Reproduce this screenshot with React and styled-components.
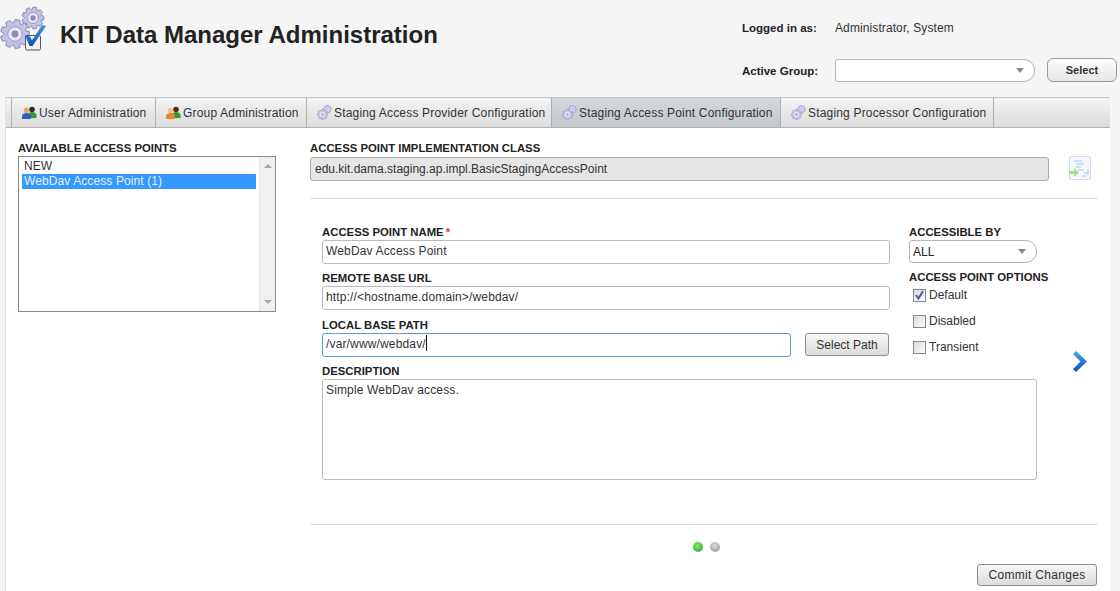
import React from 'react'
import styled, {createGlobalStyle} from 'styled-components'

const GlobalStyle = createGlobalStyle`
  html, body {
    margin: 0;
    height: 591px;
    overflow: hidden;
    background: #f5f5f5;
    color: #222;
    font: 12px/16px "Liberation Sans", Arial, sans-serif;
  }
  * { box-sizing: border-box; }
`

function gearPath(cx, cy, outer, inner, teeth) {
  const step = (Math.PI * 2) / teeth
  const points = []
  for (let i = 0; i < teeth; i++) {
    const a = i * step
    const pairs = [[-0.3, inner], [-0.17, outer], [0.17, outer], [0.3, inner]]
    pairs.forEach(([off, r]) => {
      const x = cx + Math.cos(a + off * step * 1.4) * r
      const y = cy + Math.sin(a + off * step * 1.4) * r
      points.push(`${x.toFixed(2)} ${y.toFixed(2)}`)
    })
  }
  return `M${points.join('L')}Z`
}

function Gear({cx, cy, r, teeth = 10}) {
  const big = r > 8
  return (
    <g>
      <path d={gearPath(cx, cy, r, r * 0.78, teeth)} fill="#c2c2e6" stroke="#8a8ab8" strokeWidth={big ? 1 : 0.4} />
      <circle cx={cx} cy={cy} r={r * 0.5} fill="#e6e6f6" stroke={big ? '#9a9ac4' : 'none'} />
      <circle cx={cx} cy={cy} r={r * 0.24} fill={big ? '#8c8cba' : '#a8a8d0'} />
    </g>
  )
}

function LogoIcon() {
  return (
    <svg width="46" height="52" viewBox="0 0 46 52">
      <defs>
        <linearGradient id="tick" x1="0" y1="0" x2="0" y2="1">
          <stop offset="0" stopColor="#3f9bf0" />
          <stop offset="1" stopColor="#0a4fb5" />
        </linearGradient>
      </defs>
      <Gear cx={33} cy={18} r={11} teeth={9} />
      <Gear cx={15} cy={34} r={14.5} teeth={9} />
      <rect x="25.500" y="35.500" width="15" height="14.500" rx="1.500" fill="#f4f4f4" stroke="#555" />
      <path d="M25 35l5 1.500 2 4L42 25l4 1-13.500 20h-3z" fill="url(#tick)" />
    </svg>
  )
}

function GearsIcon() {
  return (
    <svg width="15" height="15" viewBox="0 0 15 15">
      <Gear cx={10.5} cy={4.2} r={4} teeth={8} />
      <Gear cx={5.5} cy={9.5} r={5.4} teeth={8} />
    </svg>
  )
}

function UsersIcon({swap}) {
  const front = swap ? '#e8892a' : '#2d62c4'
  const backHead = swap ? '#4a3018' : '#2a2a2a'
  const frontHead = swap ? '#f0c090' : '#e9a860'
  return (
    <svg width="15" height="13" viewBox="0 0 15 13">
      <circle cx="10" cy="3.500" r="2.800" fill={backHead} />
      <path d="M6 12V9c0-2 2-3 4-3s4.500 1 4.500 3v3z" fill="#2f9a35" />
      <circle cx="4.500" cy="4.500" r="2.800" fill={frontHead} />
      <path d="M0 13V10c0-2 2-3 4.500-3S9 8 9 10v3z" fill={front} />
    </svg>
  )
}

function ImportIcon() {
  return (
    <svg width="24" height="25" viewBox="0 0 24 25">
      <rect x="1.500" y="0.500" width="21" height="23" rx="2" fill="#f4f8fc" stroke="#d5dde6" />
      <path d="M6 5h8M8 8h8M8 11h5M10 14h6M16 17h4M14 20h5M20 13v6" stroke="#a6c4e6" strokeWidth="1" fill="none" />
      <path d="M1 15h5v-3l5 4.500-5 4.500v-3H1z" fill="#a9dd8b" />
    </svg>
  )
}

function NextArrow() {
  return (
    <svg width="15" height="21" viewBox="0 0 15 21">
      <defs>
        <linearGradient id="arrow" x1="0" y1="0" x2="0" y2="1">
          <stop offset="0" stopColor="#45a0f2" />
          <stop offset="1" stopColor="#0b55b8" />
        </linearGradient>
      </defs>
      <path d="M1 3l3-3 11 10.500L4 21l-3-3 7.500-7.500z" fill="url(#arrow)" />
    </svg>
  )
}

const Header = styled.header`
  display: flex;
  justify-content: space-between;
  height: 97px;
`

const Brand = styled.div`
  display: flex;
  align-items: flex-start;
  gap: 14px;
`

const Title = styled.h1`
  margin: 22px 0 0;
  font-size: 24px;
  line-height: 26px;
  font-weight: bold;
  color: #222;
`

const Session = styled.div`
  display: grid;
  grid-template-columns: 93px 200px 82px;
  grid-template-rows: 24px 23px;
  row-gap: 19px;
  align-items: center;
  padding: 16px 3px 0 0;
`

const SessionLabel = styled.span`
  font-size: 11.5px;
  font-weight: bold;
`

const SessionValue = styled.span`
  grid-column: span 2;
  color: #333;
  letter-spacing: 0.1px;
`

const Combo = styled.div`
  display: flex;
  align-items: center;
  width: ${(props) => props.width}px;
  height: 23px;
  padding: 0 10px 0 3px;
  background: #fff;
  border: 1px solid #b6b6b6;
  border-radius: 3px 11px 11px 3px;
  &::after {
    content: '';
    margin-left: auto;
    border: 4px solid transparent;
    border-top: 5px solid #888;
    border-bottom: 0;
  }
`

const RoundButton = styled.button`
  align-self: start;
  justify-self: end;
  width: 70px;
  height: 24px;
  margin-top: -1px;
  padding: 0;
  font: bold 11px "Liberation Sans", Arial, sans-serif;
  color: #333;
  background: linear-gradient(#fdfdfd, #e6e6e6);
  border: 1px solid #9a9a9a;
  border-radius: 6px;
`

const Panel = styled.main`
  height: 494px;
  margin: 0 10px 0 5px;
  background: #fff;
  border-left: 1px solid #e2e2e2;
`

const TabBar = styled.nav`
  display: flex;
  height: 31px;
  padding-left: 5px;
  background: linear-gradient(#f3f3f3, #dcdcdc);
  border-top: 1px solid #c4c4c4;
  border-bottom: 1px solid #b4b4b4;
`

const Tab = styled.div`
  display: flex;
  align-items: center;
  gap: 2px;
  width: ${(props) => props.width}px;
  padding-left: 10px;
  letter-spacing: 0.18px;
  color: #333;
  white-space: nowrap;
  border-left: 1px solid #b0b0b0;
  background: ${(props) => props.active ? 'linear-gradient(#d3d8dd, #c3c8cd)' : 'none'};
  &:last-child {
    border-right: 1px solid #b0b0b0;
  }
`

const Body = styled.div`
  display: flex;
  padding: 12px 12px 0 12px;
`

const Sidebar = styled.aside`
  width: 258px;
  margin-right: 34px;
`

const SectionLabel = styled.div`
  height: 16px;
  margin-top: ${(props) => props.top || 0}px;
  font-size: 11.35px;
  font-weight: bold;
  color: #222;
  white-space: nowrap;
`

const ListBox = styled.div`
  display: flex;
  height: 156px;
  border: 1px solid #888;
  letter-spacing: 0.1px;
`

const ListItems = styled.div`
  flex: 1;
  padding: 2px 3px 0;
`

const ListItem = styled.div`
  height: 15px;
  padding-left: 2px;
  line-height: 15px;
  color: ${(props) => props.selected ? '#e6f0ff' : '#333'};
  background: ${(props) => props.selected ? '#3399ff' : 'none'};
`

const ScrollTrack = styled.div`
  display: flex;
  flex-direction: column;
  justify-content: space-between;
  align-items: center;
  width: 16px;
  padding: 7px 0;
  background: #f0f0f0;
  border-left: 1px solid #e4e4e4;
`

const ScrollArrow = styled.span`
  border-left: 4px solid transparent;
  border-right: 4px solid transparent;
  border-${(props) => props.down ? 'top' : 'bottom'}: 4px solid #a8a8a8;
`

const Editor = styled.section`
  flex: 1;
  min-width: 0;
`

const ClassRow = styled.div`
  display: flex;
  align-items: center;
  gap: 19px;
`

const ClassField = styled.div`
  flex: 1;
  height: 24px;
  padding: 0 4px;
  line-height: 22px;
  color: #333;
  background: #e6e6e6;
  border: 1px solid #aaa;
  border-radius: 3px;
`

const ClassIcon = styled.div`
  display: flex;
  width: 24px;
  margin-right: 6px;
`

const Rule = styled.hr`
  height: 1px;
  margin: ${(props) => props.top}px 0 0;
  border: 0;
  background: #dcdcdc;
`

const FormRow = styled.div`
  display: flex;
  align-items: center;
  padding: 25px 0 0 12px;
`

const FormGrid = styled.div`
  display: grid;
  grid-template-columns: 568px 128px;
  column-gap: 19px;
`

const Column = styled.div`
  display: flex;
  flex-direction: column;
`

const Field = styled.div`
  height: ${(props) => props.height || 24}px;
  margin-bottom: ${(props) => props.bottom || 0}px;
  padding: 0 3px;
  letter-spacing: 0.15px;
  line-height: 20px;
  color: #333;
  white-space: nowrap;
  background: #fff;
  border: 1px solid ${(props) => props.focused ? '#5b9bd5' : '#bbb'};
  border-radius: 3px;
`

const Caret = styled.span`
  display: inline-block;
  width: 1px;
  height: 16px;
  vertical-align: text-bottom;
  background: #111;
`

const Required = styled.span`
  margin-left: 2px;
  color: #d33;
`

const PathRow = styled.div`
  display: flex;
  align-items: flex-start;
  justify-content: space-between;
  padding-right: 1px;
  & > :first-child {
    width: 469px;
  }
`

const PlainButton = styled.button`
  width: ${(props) => props.width}px;
  height: ${(props) => props.height}px;
  padding: 0;
  font: 12px "Liberation Sans", Arial, sans-serif;
  letter-spacing: ${(props) => props.tracking || 0}px;
  color: #333;
  background: linear-gradient(#f6f6f6, #dcdcdc);
  border: 1px solid #8c8c8c;
  border-radius: 3px;
`

const Description = styled.div`
  grid-column: span 2;
`

const Option = styled.label`
  display: flex;
  align-items: center;
  gap: 3px;
  height: 16px;
  margin: 2px 0 8px 4px;
  color: #333;
  &:last-child {
    margin-bottom: 0;
  }
`

const Box = styled.span`
  display: flex;
  align-items: center;
  justify-content: center;
  width: 13px;
  height: 13px;
  background: linear-gradient(135deg, #dcdcdc, #fbfbfb);
  border: 1px solid #8a8a8a;
`

const ArrowSlot = styled.div`
  display: flex;
  margin: 0 0 0 35px;
  padding-top: 19px;
`

const Pager = styled.div`
  display: flex;
  justify-content: center;
  gap: 7px;
  margin-top: 17px;
  padding-left: 5px;
`

const Dot = styled.span`
  width: 10px;
  height: 10px;
  border-radius: 50%;
  background: ${(props) => props.on
    ? 'radial-gradient(circle at 45% 35%, #7fe56f, #22a81e)'
    : 'radial-gradient(circle at 45% 35%, #dcdcdc, #8f8f8f)'};
`

const Actions = styled.div`
  display: flex;
  justify-content: flex-end;
  margin-top: 12px;
  padding-right: 1px;
`

const tabs = [
  {label: 'User Administration', width: 144, icon: <UsersIcon />},
  {label: 'Group Administration', width: 151, icon: <UsersIcon swap />},
  {label: 'Staging Access Provider Configuration', width: 245, icon: <GearsIcon />},
  {label: 'Staging Access Point Configuration', width: 229, icon: <GearsIcon />, active: true},
  {label: 'Staging Processor Configuration', width: 214, icon: <GearsIcon />},
]

export default function App() {
  return (
    <>
      <GlobalStyle />
      <Header>
        <Brand>
          <LogoIcon />
          <Title>KIT Data Manager Administration</Title>
        </Brand>
        <Session>
          <SessionLabel>Logged in as:</SessionLabel>
          <SessionValue>Administrator, System</SessionValue>
          <SessionLabel>Active Group:</SessionLabel>
          <Combo width={200} />
          <RoundButton>Select</RoundButton>
        </Session>
      </Header>
      <Panel>
        <TabBar>
          {tabs.map((tab) => (
            <Tab key={tab.label} width={tab.width} active={tab.active}>
              {tab.icon}
              {tab.label}
            </Tab>
          ))}
        </TabBar>
        <Body>
          <Sidebar>
            <SectionLabel>AVAILABLE ACCESS POINTS</SectionLabel>
            <ListBox>
              <ListItems>
                <ListItem>NEW</ListItem>
                <ListItem selected>WebDav Access Point (1)</ListItem>
              </ListItems>
              <ScrollTrack>
                <ScrollArrow />
                <ScrollArrow down />
              </ScrollTrack>
            </ListBox>
          </Sidebar>
          <Editor>
            <SectionLabel>ACCESS POINT IMPLEMENTATION CLASS</SectionLabel>
            <ClassRow>
              <ClassField>edu.kit.dama.staging.ap.impl.BasicStagingAccessPoint</ClassField>
              <ClassIcon><ImportIcon /></ClassIcon>
            </ClassRow>
            <Rule top={17} />
            <FormRow>
              <FormGrid>
                <Column>
                  <SectionLabel>ACCESS POINT NAME<Required>*</Required></SectionLabel>
                  <Field bottom={6}>WebDav Access Point</Field>
                  <SectionLabel>REMOTE BASE URL</SectionLabel>
                  <Field bottom={7}>http://&lt;hostname.domain&gt;/webdav/</Field>
                  <SectionLabel>LOCAL BASE PATH</SectionLabel>
                  <PathRow>
                    <Field focused>/var/www/webdav/<Caret /></Field>
                    <PlainButton width={84} height={23}>Select Path</PlainButton>
                  </PathRow>
                </Column>
                <Column>
                  <SectionLabel>ACCESSIBLE BY</SectionLabel>
                  <Combo width={128}>ALL</Combo>
                  <SectionLabel top={6}>ACCESS POINT OPTIONS</SectionLabel>
                  <Option>
                    <Box>
                      <svg width="11" height="11" viewBox="0 0 11 11">
                        <path d="M2 5l2.500 3.500L9 1" fill="none" stroke="#4a5aa8" strokeWidth="2" />
                      </svg>
                    </Box>
                    Default
                  </Option>
                  <Option><Box />Disabled</Option>
                  <Option><Box />Transient</Option>
                </Column>
                <Description>
                  <SectionLabel top={6}>DESCRIPTION</SectionLabel>
                  <Field height={101}>Simple WebDav access.</Field>
                </Description>
              </FormGrid>
              <ArrowSlot><NextArrow /></ArrowSlot>
            </FormRow>
            <Rule top={44} />
            <Pager>
              <Dot on />
              <Dot />
            </Pager>
            <Actions>
              <PlainButton width={120} height={22} tracking={0.3}>Commit Changes</PlainButton>
            </Actions>
          </Editor>
        </Body>
      </Panel>
    </>
  )
}
